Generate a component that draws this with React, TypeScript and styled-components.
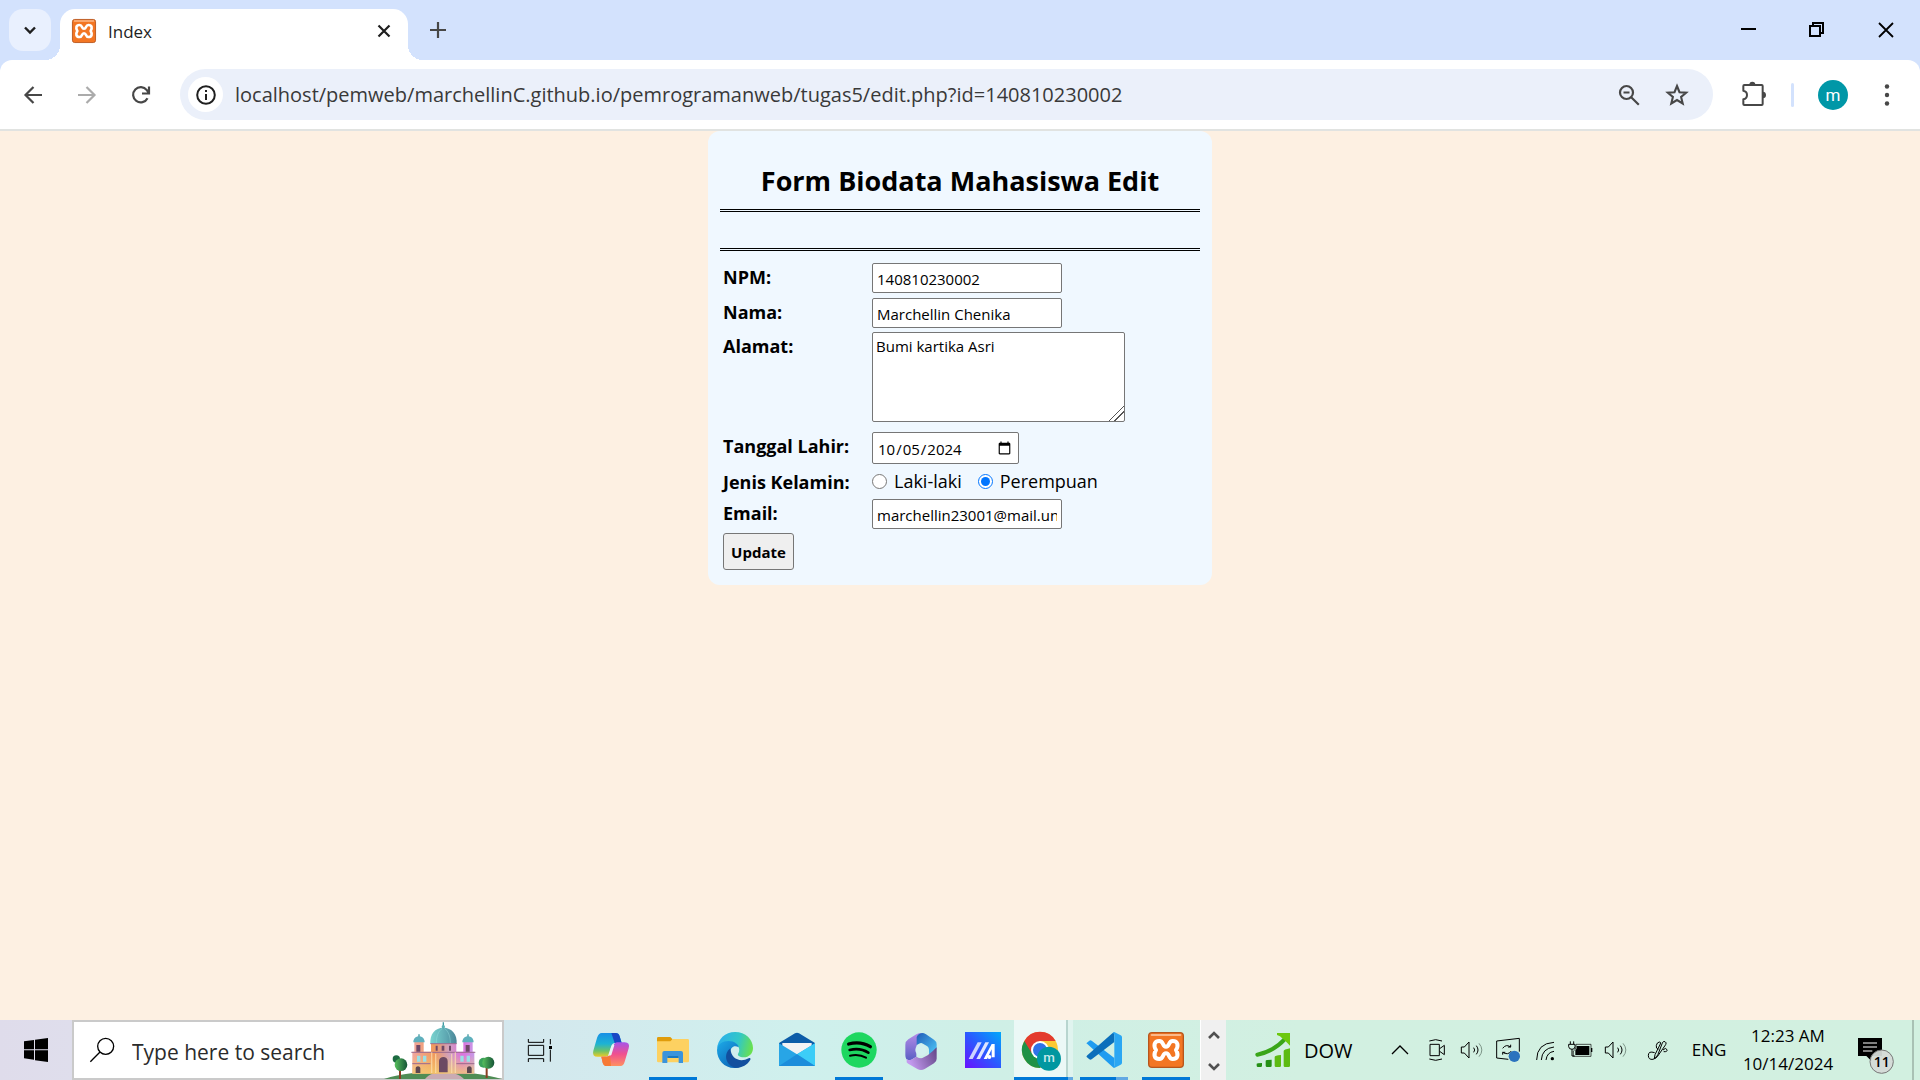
import React, { useState } from "react";
import styled, { createGlobalStyle } from "styled-components";

const GlobalStyle = createGlobalStyle`
  * { box-sizing: border-box; }
  body { margin: 0; font-family: "Open Sans", "Noto Sans", sans-serif; color: #000; }
  button, input, textarea { font-family: inherit; }
  button { border: 0; padding: 0; background: none; color: inherit; }
  svg { display: block; flex: none; overflow: visible; }
`;

/* ---------- window frame ---------- */

const Window = styled.div`
  min-height: 100vh;
  display: flex;
  flex-direction: column;
  background: #fdf0e2;
`;

const TabStrip = styled.header`
  height: 60px;
  display: flex;
  align-items: flex-end;
  padding-left: 9px;
  background: #d3e2fd;
`;

const TabSearch = styled.button`
  width: 42px;
  height: 42px;
  margin: 0 9px 9px 0;
  display: grid;
  place-items: center;
  border-radius: 14px;
  background: #e9f0fe;
`;

const Tab = styled.div`
  position: relative;
  width: 348px;
  height: 51px;
  padding: 0 12px 8px;
  display: flex;
  align-items: center;
  gap: 12px;
  border-radius: 15px 15px 0 0;
  background: #fff;
  font-size: 17px;
  color: #1f1f1f;

  &::before,
  &::after {
    content: "";
    position: absolute;
    bottom: 0;
    width: 15px;
    height: 15px;
  }
  &::before {
    right: 100%;
    background: radial-gradient(circle at 0 0, transparent 15px, #fff 15px);
  }
  &::after {
    left: 100%;
    background: radial-gradient(circle at 100% 0, transparent 15px, #fff 15px);
  }
`;

const TabTitle = styled.span`
  flex: 1;
  padding-top: 2px;
`;

const IconButton = styled.button<{ $w?: number; $h?: number }>`
  width: ${(p) => p.$w ?? 24}px;
  height: ${(p) => p.$h ?? 24}px;
  flex: none;
  display: grid;
  place-items: center;
`;

const WindowButtons = styled.div`
  margin-left: auto;
  display: flex;
`;

const Toolbar = styled.div`
  background: #d3e2fd;
`;

const ToolbarInner = styled.div`
  height: 71px;
  padding: 9px 15px 9px 6px;
  display: flex;
  align-items: center;
  border-bottom: 2px solid #e1e3e1;
  border-radius: 12px 12px 0 0;
  background: #fff;
`;

const Omnibox = styled.form`
  flex: 1;
  height: 51px;
  margin: 0 14px 0 12px;
  padding: 0 12px 0 8px;
  display: flex;
  align-items: center;
  border-radius: 26px;
  background: #ebf0fa;
`;

const SiteInfo = styled.button`
  width: 35px;
  height: 35px;
  margin-right: 12px;
  display: grid;
  place-items: center;
  border-radius: 50%;
  background: #fff;
`;

const UrlInput = styled.input`
  flex: 1;
  min-width: 0;
  padding: 0;
  border: 0;
  outline: 0;
  background: transparent;
  font-size: 20px;
  color: #393939;
`;

const Divider = styled.span`
  width: 3px;
  height: 24px;
  margin: 0 24px 0 10px;
  border-radius: 2px;
  background: #d3e2fd;
`;

const Avatar = styled.button`
  width: 30px;
  height: 30px;
  margin-right: 21px;
  border-radius: 50%;
  background: #0097a7;
  color: #fff;
  font-family: Roboto, sans-serif;
  font-size: 17px;
  line-height: 28px;
`;

/* ---------- biodata form ---------- */

const Page = styled.main`
  flex: 1;
`;

const Card = styled.section`
  width: 504px;
  margin: 0 auto;
  padding: 31px 12px 15px;
  border-radius: 12px;
  background: #f0f8ff;
`;

const Title = styled.h1`
  margin: 0 0 9px;
  text-align: center;
  font-size: 27px;
  line-height: 38px;
  font-weight: 700;
`;

const DoubleRule = styled.hr`
  height: 3px;
  margin: 0 0 36px;
  border: solid #000;
  border-width: 1px 0;

  & + & {
    margin-bottom: 12px;
  }
`;

const BioForm = styled.form`
  padding: 0 3px;
  display: grid;
  gap: 4px;
`;

const Row = styled.div<{ $h: number }>`
  height: ${(p) => p.$h}px;
  display: grid;
  grid-template-columns: 149px 1fr;
  align-items: start;
`;

const Label = styled.label`
  padding-top: 1px;
  font-size: 18px;
  line-height: 27px;
  font-weight: 700;
`;

const TextInput = styled.input`
  width: 190px;
  height: 30px;
  padding: 1px 4px 0;
  border: 1px solid #767676;
  border-radius: 2px;
  background: #fff;
  font-size: 15px;
  color: #000;
`;

const DateInput = styled(TextInput)`
  width: 147px;
  height: 32px;
`;

const Address = styled.textarea`
  width: 253px;
  height: 90px;
  padding: 3px;
  border: 1px solid #767676;
  border-radius: 2px;
  background: #fff;
  font-size: 15px;
  line-height: 20px;
  color: #000;

  &::-webkit-resizer {
    background: linear-gradient(
      135deg,
      transparent 10px,
      #555 10px,
      #555 11px,
      transparent 11px,
      transparent 14px,
      #555 14px,
      #555 15px,
      transparent 15px
    );
  }
`;

const Radios = styled.div`
  display: flex;
  align-items: center;
  font-size: 18px;
  line-height: 27px;
`;

const Choice = styled.label`
  margin-right: 16px;
  display: flex;
  align-items: center;
  gap: 7px;
`;

const Radio = styled.input`
  width: 15px;
  height: 15px;
  margin: 0;
`;

const Submit = styled.button`
  width: 71px;
  height: 37px;
  border: 1px solid #767676;
  border-radius: 3px;
  background: #efefef;
  font-size: 15px;
  font-weight: 700;
`;

/* ---------- taskbar ---------- */

const Taskbar = styled.footer`
  height: 60px;
  display: flex;
  background: linear-gradient(90deg, #dfdceb 0, #dfdeec 72px, #d4e8ee 520px, #cff0ed 800px, #cfefe6 1000px, #d2f0e1 1300px, #d2f0e0 100%);
`;

const Start = styled.button`
  width: 72px;
  display: grid;
  place-items: center;
`;

const SearchBox = styled.label`
  width: 432px;
  padding-left: 16px;
  display: flex;
  align-items: center;
  border: 2px solid #cacaca;
  background: #fff;
`;

const SearchInput = styled.input`
  flex: 1;
  min-width: 0;
  margin-left: 18px;
  padding: 4px 0 0;
  border: 0;
  outline: 0;
  background: none;
  font-size: 21px;
  &::placeholder { color: #2b2b2b; opacity: 1; }
`;

const AppButton = styled.button<{ $w?: number; $run?: string; $active?: boolean }>`
  position: relative;
  width: ${(p) => p.$w ?? 62}px;
  display: grid;
  place-items: center;
  &::after {
    content: "";
    position: absolute;
    bottom: 0;
    height: 3px;
    left: ${(p) => (p.$active ? 0 : 7)}px;
    right: ${(p) => (p.$active ? 0 : 7)}px;
    background: ${(p) => p.$run ?? "none"};
  }
`;

const ActiveApp = styled(AppButton)`
  padding-right: 7px;
  background: linear-gradient(90deg, #ebf8f6 52px, #b7d5cf 52px, #b7d5cf 54px, #e0f4ef 54px);
`;

const Scroller = styled.div`
  width: 26px;
  margin-left: 3px;
  display: flex;
  flex-direction: column;
  justify-content: space-between;
  align-items: center;
  padding: 7px 0 5px;
  border-left: 1px solid #fff;
  background: #f0f0f0;
`;

const News = styled.button`
  padding-left: 30px;
  display: flex;
  align-items: center;
  gap: 14px;
  font-size: 20px;
`;

const Tray = styled.div`
  margin-left: auto;
  display: flex;
`;

const TrayItem = styled.button<{ $w?: number }>`
  width: ${(p) => p.$w ?? 36}px;
  display: grid;
  place-content: center;
  font-size: 17px;
  line-height: 28px;
  text-align: center;
`;

const ShowDesktop = styled.button`
  width: 8px;
  border-left: 2px solid #a9c1b4;
`;

/* ---------- drawings ---------- */

type ArtProps = { box: string; w?: number; h?: number; children: React.ReactNode };

const Art = ({ box, w = 36, h = w, children }: ArtProps) => (
  <svg width={w} height={h} viewBox={box} fill="none" aria-hidden="true">
    {children}
  </svg>
);

const Xampp = ({ size }: { size: number }) => (
  <Art box="561 51 108 108" w={size}>
    <rect x="563" y="53" width="104" height="104" rx="10" fill="#f37623" stroke="#b8551b" strokeWidth="4" />
    <path d="M572 60h86" stroke="#fbb98a" strokeWidth="6" strokeLinecap="round" />
    <path
      d="M615 95C603 95 609 78 595 78 579 78 577 92 585 105 577 118 579 132 595 132 609 132 603 115 615 115 627 115 621 132 635 132 651 132 653 118 645 105 653 92 651 78 635 78 621 78 627 95 615 95Z"
      stroke="#fff"
      strokeWidth="12"
      strokeLinejoin="round"
    />
  </Art>
);

const Castle = () => (
  <Art box="195 18 354 174" w={118} h={58}>
    <defs>
      <linearGradient id="wall" x1="280" x2="466" y1="0" y2="0" gradientUnits="userSpaceOnUse">
        <stop stopColor="#f0a7a0" />
        <stop offset=".35" stopColor="#f19a5c" />
        <stop offset=".6" stopColor="#cfa0c0" />
        <stop offset=".8" stopColor="#dd71dc" />
        <stop offset="1" stopColor="#c79be8" />
      </linearGradient>
      <linearGradient id="base" x1="0" x2="0" y1="120" y2="180" gradientUnits="userSpaceOnUse">
        <stop stopColor="#f7d169" stopOpacity="0" />
        <stop offset="1" stopColor="#f3cf6e" stopOpacity=".85" />
      </linearGradient>
      <linearGradient id="dome" x1="335" x2="412" y1="0" y2="0" gradientUnits="userSpaceOnUse">
        <stop stopColor="#79d3cf" />
        <stop offset=".6" stopColor="#5fa9b3" />
        <stop offset="1" stopColor="#4b8798" />
      </linearGradient>
      <linearGradient id="leaf" x1="0" x2="1">
        <stop stopColor="#58c05d" />
        <stop offset="1" stopColor="#155437" />
      </linearGradient>
    </defs>
    <path d="M195 192c50-18 110-22 178-22s120 6 176 22Z" fill="#4f8d55" />
    <path d="M318 192c10-14 30-22 55-22s50 8 62 22Z" fill="#c9abb3" />
    <path d="M280 110h186v66H280z" fill="url(#wall)" />
    <path d="M280 110h186v66H280z" fill="url(#base)" />
    <path d="M286 80h28v32h-28zM433 80h28v32h-28zM336 86h76v28h-76z" fill="url(#wall)" />
    <path d="M334 86c-2-28 14-48 39-48s42 20 40 48Z" fill="url(#dome)" />
    <path d="M352 84c0-20 6-36 18-44M394 84c0-20-6-36-18-44" stroke="#9be3e0" strokeOpacity=".6" strokeWidth="2" />
    <path d="M373 22v18M300 58v8M447 58v8" stroke="#3f98a0" strokeWidth="4" />
    <circle cx="373" cy="35" r="5" fill="#5ab1b5" />
    <path d="M283 82c0-24 34-24 34 0ZM430 82c0-24 34-24 34 0Z" fill="#5fb0bd" />
    <path d="M277 112h192M334 86h79M280 146h54M412 146h54" stroke="#9c6a8e" strokeWidth="3" />
    <path d="M338 112v62M350 116v58M398 116v58M409 112v62" stroke="#fce0b1" strokeOpacity=".7" strokeWidth="4" />
    <path d="M292 90h12v20h-12zM440 90h12v20h-12zM350 92h6v15h-6zM368 92h8v15h-8zM390 92h6v15h-6z" fill="#6e4867" />
    <path d="M294 122h10v18h-10zM312 122h10v18h-10zM424 122h10v18h-10zM443 122h10v18h-10z" fill="#9be0e6" />
    <path d="M360 172v-34c0-16 26-16 26 0v34Z" fill="#6c4a63" />
    <path d="M290 174v-14c0-8 14-8 14 0v14ZM444 174v-14c0-8 14-8 14 0v14Z" fill="#5d4650" />
    <path d="M243 192v-45M503 189v-43" stroke="#8a3e23" strokeWidth="6" />
    <circle cx="232" cy="132" r="11" fill="#1d6b42" />
    <circle cx="246" cy="149" r="19" fill="url(#leaf)" />
    <circle cx="494" cy="143" r="15" fill="#3ba25a" />
    <circle cx="508" cy="143" r="18" fill="url(#leaf)" />
  </Art>
);

const Speaker = () => (
  <Art box="660 69 72 72" w={24}>
    <path d="M664 96h9l14-15v48l-14-15h-9zM701 98q6 7 0 14M709 92q10 13 0 26" stroke="#000" strokeWidth="3" />
    <path d="M717 85q17 20 0 40" stroke="#7d9588" strokeWidth="3" />
  </Art>
);

const Chevron = ({ up }: { up?: boolean }) => (
  <Art box="0 0 12 12" w={12}>
    <path d={up ? "M1 9l5-5 5 5" : "M1 3l5 5 5-5"} stroke="#505050" strokeWidth="2.6" />
  </Art>
);

const BrowserTop = () => (
  <>
    <TabStrip>
      <TabSearch aria-label="Search tabs">
        <Art box="0 0 14 14" w={14}>
          <path d="M2 4.500l5 5 5-5" stroke="#1f1f1f" strokeWidth="2.400" />
        </Art>
      </TabSearch>
      <Tab>
        <Xampp size={24} />
        <TabTitle>Index</TabTitle>
        <IconButton aria-label="Close tab">
          <Art box="0 0 14 14" w={14}>
            <path d="M1.500 1.500l11 11M12.500 1.500l-11 11" stroke="#1f1f1f" strokeWidth="2.200" />
          </Art>
        </IconButton>
      </Tab>
      <IconButton $w={60} $h={60} aria-label="New tab">
        <Art box="0 0 16 16" w={16}>
          <path d="M8 0v16M0 8h16" stroke="#474747" strokeWidth="2.200" />
        </Art>
      </IconButton>
      <WindowButtons>
        <IconButton $w={69} $h={60} aria-label="Minimize">
          <Art box="0 0 16 16" w={16}>
            <path d="M1 7h15" stroke="#000" strokeWidth="2" />
          </Art>
        </IconButton>
        <IconButton $w={69} $h={60} aria-label="Restore">
          <Art box="0 0 16 16" w={16}>
            <path d="M1 4h10v10H1zM4 4V1h10v10h-3" stroke="#000" strokeWidth="2" />
          </Art>
        </IconButton>
        <IconButton $w={69} $h={60} aria-label="Close window">
          <Art box="0 0 16 16" w={16}>
            <path d="M1 1l14 14M15 1L1 15" stroke="#000" strokeWidth="1.800" />
          </Art>
        </IconButton>
      </WindowButtons>
    </TabStrip>
    <Toolbar>
      <ToolbarInner>
        <IconButton $w={54} aria-label="Back">
          <Art box="0 0 18 18" w={18}>
            <path d="M18 9H1.500M9.500 1L1.500 9l8 8" stroke="#474747" strokeWidth="2.200" />
          </Art>
        </IconButton>
        <IconButton $w={54} aria-label="Forward">
          <Art box="0 0 18 18" w={18}>
            <path d="M0 9h16.500M8.500 1l8 8-8 8" stroke="#ababab" strokeWidth="2.200" />
          </Art>
        </IconButton>
        <IconButton $w={54} aria-label="Reload">
          <Art box="0 0 18 18" w={18}>
            <path d="M15.500 12.200A7.600 7.600 0 1 1 14.800 4.200L16.500 6.500M17 .5v7H10" stroke="#474747" strokeWidth="2.200" />
          </Art>
        </IconButton>
        <Omnibox onSubmit={(e) => e.preventDefault()}>
          <SiteInfo type="button" aria-label="Site information">
            <Art box="0 0 20 20" w={20}>
              <circle cx="10" cy="10" r="8.800" stroke="#1f1f1f" strokeWidth="2" />
              <path d="M10 9v6M10 5v2" stroke="#1f1f1f" strokeWidth="2" />
            </Art>
          </SiteInfo>
          <UrlInput
            aria-label="Address"
            defaultValue="localhost/pemweb/marchellinC.github.io/pemrogramanweb/tugas5/edit.php?id=140810230002"
          />
          <IconButton $w={48} type="button" aria-label="Zoom out">
            <Art box="0 0 22 22" w={22}>
              <circle cx="8.500" cy="8.500" r="6.500" stroke="#474747" strokeWidth="2.200" />
              <path d="M13.200 13.200l7.600 7.600M5.500 8.500h6" stroke="#474747" strokeWidth="2.200" />
            </Art>
          </IconButton>
          <IconButton $w={48} type="button" aria-label="Bookmark this page">
            <Art box="0 0 24 24" w={24}>
              <path
                d="M12 3l2.500 6.200 6.700.5-5.100 4.300 1.600 6.500L12 17l-5.700 3.500L7.900 14 2.800 9.700l6.700-.5z"
                stroke="#474747"
                strokeWidth="2.100"
              />
            </Art>
          </IconButton>
        </Omnibox>
        <IconButton $w={54} $h={48} aria-label="Extensions">
          <Art box="546 244 72 78" w={24} h={26}>
            <path
              d="M550 256q0-3 3-3h52q3 0 3 3v54q0 3-3 3h-52q-3 0-3-3v-14q11-2 11-13t-11-13z"
              stroke="#474747"
              strokeWidth="6"
              strokeLinejoin="round"
            />
            <path d="M568 252a9 9 0 0 1 18 0zM608 273a10 10 0 0 1 0 20z" fill="#474747" />
          </Art>
        </IconButton>
        <Divider />
        <Avatar aria-label="Profile">m</Avatar>
        <IconButton $w={36} aria-label="Menu">
          <Art box="0 0 4 22" w={4} h={22}>
            <g fill="#474747">
              <circle cx="2" cy="2.500" r="2.200" />
              <circle cx="2" cy="11" r="2.200" />
              <circle cx="2" cy="19.500" r="2.200" />
            </g>
          </Art>
        </IconButton>
      </ToolbarInner>
    </Toolbar>
  </>
);

const BiodataForm = () => {
  const [gender, setGender] = useState("Perempuan");
  return (
    <Card>
      <Title>Form Biodata Mahasiswa Edit</Title>
      <DoubleRule />
      <DoubleRule />
      <BioForm onSubmit={(e) => e.preventDefault()}>
        <Row $h={31}>
          <Label htmlFor="npm">NPM:</Label>
          <TextInput id="npm" defaultValue="140810230002" />
        </Row>
        <Row $h={30}>
          <Label htmlFor="nama">Nama:</Label>
          <TextInput id="nama" defaultValue="Marchellin Chenika" />
        </Row>
        <Row $h={96}>
          <Label htmlFor="alamat">Alamat:</Label>
          <Address id="alamat" defaultValue="Bumi kartika Asri" />
        </Row>
        <Row $h={32}>
          <Label htmlFor="lahir">Tanggal Lahir:</Label>
          <DateInput id="lahir" type="date" defaultValue="2024-10-05" />
        </Row>
        <Row $h={27}>
          <Label as="span" id="kelamin">Jenis Kelamin:</Label>
          <Radios role="radiogroup" aria-labelledby="kelamin">
            {["Laki-laki", "Perempuan"].map((g) => (
              <Choice key={g}>
                <Radio type="radio" name="gender" checked={gender === g} onChange={() => setGender(g)} />
                {g}
              </Choice>
            ))}
          </Radios>
        </Row>
        <Row $h={30}>
          <Label htmlFor="email">Email:</Label>
          <TextInput id="email" defaultValue="marchellin23001@mail.unpad.ac.id" />
        </Row>
        <Submit type="submit">Update</Submit>
      </BioForm>
    </Card>
  );
};

const RUN = "#0078d7";

const TaskbarApps = () => (
  <>
    <AppButton $w={76} aria-label="Task View">
      <Art box="621 66 90 75" w={30} h={25}>
        <path d="M625 69v10h46V69M625 88h46v30h-46zM625 138v-10h46v10M691 69v16M691 101v36" stroke="#000" strokeWidth="3" />
        <path d="M687 90h9v9h-9z" fill="#000" />
      </Art>
    </AppButton>
    <AppButton aria-label="Copilot">
      <Art box="819 51 108 108">
        <defs>
          <linearGradient id="cpA" x1="0" x2="0" y1="54" y2="126" gradientUnits="userSpaceOnUse">
            <stop stopColor="#188fe6" />
            <stop offset=".45" stopColor="#1db3d3" />
            <stop offset=".75" stopColor="#6ec368" />
            <stop offset="1" stopColor="#f4cc22" />
          </linearGradient>
          <linearGradient id="cpB" x1="0" x2="0" y1="80" y2="154" gradientUnits="userSpaceOnUse">
            <stop stopColor="#a255ee" />
            <stop offset=".5" stopColor="#f0508f" />
            <stop offset="1" stopColor="#ff9260" />
          </linearGradient>
        </defs>
        <path d="M845 54h42q9 0 12 10l6 20h-20q-8 0-11 10l-6 22q-3 9-12 9h-23q-18 0-13-18l11-38q5-15 14-15z" fill="url(#cpA)" />
        <path d="M874 54h13q9 0 12 10l6 20h-21z" fill="#1a47c5" />
        <path d="M902 153h-42q-9 0-12-10l-4-18h16q8 0 12-9l8-23q3-11 12-11h22q17 0 12 18l-12 40q-4 13-12 13z" fill="url(#cpB)" />
        <path d="M873 153h-13q-9 0-12-10l-4-18h16q8 0 10-6z" fill="#f67a35" />
        <path d="M880 88q-6 2-8 10l-7 22q3 3 9 0l9-29z" fill="#e8f3f5" />
      </Art>
    </AppButton>
    <AppButton $run={RUN} aria-label="File Explorer">
      <Art box="45 51 108 108">
        <path d="M51 70q0-4 4-4h36l6 6v16H51z" fill="#e09c0b" />
        <path d="M51 79h40l7-7h45q4 0 4 4v62q0 4-4 4H55q-4 0-4-4z" fill="#fdd161" />
        <path d="M67 144v-30q0-6 6-6h50q6 0 6 6v30h-13v-21H82v21z" fill="#3b94dc" />
        <path d="M82 123h34v6H82z" fill="#1979c4" />
      </Art>
    </AppButton>
    <AppButton aria-label="Microsoft Edge">
      <Art box="231 51 108 108">
        <defs>
          <linearGradient id="edA" x1="240" x2="338" y1="70" y2="95" gradientUnits="userSpaceOnUse">
            <stop stopColor="#2bb1e8" />
            <stop offset=".55" stopColor="#31c7c8" />
            <stop offset="1" stopColor="#6ae14c" />
          </linearGradient>
          <linearGradient id="edB" x1="235" x2="290" y1="90" y2="155" gradientUnits="userSpaceOnUse">
            <stop stopColor="#1ba2e2" />
            <stop offset="1" stopColor="#0b63b6" />
          </linearGradient>
        </defs>
        <path d="M231 104C232 72 256 51 285 51c32 0 54 23 54 48 0 17-12 28-28 28-12 0-21-5-16-12 8-13-1-32-24-34-20-2-36 8-40 23z" fill="url(#edA)" />
        <path d="M231 105c2-18 17-27 34-27 19 0 31 11 31 19-13-9-25 0-25 14 0 26 27 42 48 29-9 13-22 19-36 19-30 0-52-24-52-54z" fill="url(#edB)" />
        <path d="M271 100c-22 17-14 51 14 58 20 1 37-8 46-24 2-4-2-6-5-4-25 13-53 3-55-30z" fill="#124f9e" />
      </Art>
    </AppButton>
    <AppButton aria-label="Mail">
      <Art box="417 51 108 108">
        <path d="M417 84l48-29q6-4 12 0l48 29v20H417z" fill="#0c5ca8" />
        <path d="M427 84h88v20l-44 20-44-20z" fill="#f2f2f4" />
        <path d="M417 85l54 33 54-33v68H417z" fill="#28a5e6" />
        <path d="M525 85v68l-54-35z" fill="#3ccdf7" />
        <path d="M417 153l54-35 54 35z" fill="#1c8ddb" />
      </Art>
    </AppButton>
    <AppButton $run={RUN} aria-label="Spotify">
      <Art box="603 51 108 108">
        <circle cx="657" cy="105" r="53" fill="#1ed760" />
        <path d="M626 87q35-10 65 8" stroke="#000" strokeWidth="10" strokeLinecap="round" />
        <path d="M629 105q31-8 56 8" stroke="#000" strokeWidth="8" strokeLinecap="round" />
        <path d="M630 122q27-6 48 6" stroke="#000" strokeWidth="6" strokeLinecap="round" />
      </Art>
    </AppButton>
    <AppButton aria-label="Microsoft 365">
      <Art box="789 51 108 108">
        <defs>
          <linearGradient id="mA" x1="0" x2="0" y1="55" y2="135" gradientUnits="userSpaceOnUse">
            <stop stopColor="#b58be8" />
            <stop offset="1" stopColor="#5b5fc4" />
          </linearGradient>
          <linearGradient id="mB" x1="835" x2="890" y1="60" y2="110" gradientUnits="userSpaceOnUse">
            <stop stopColor="#2465bd" />
            <stop offset="1" stopColor="#4cc3f5" />
          </linearGradient>
          <linearGradient id="mC" x1="810" x2="890" y1="145" y2="110" gradientUnits="userSpaceOnUse">
            <stop stopColor="#c49af0" />
            <stop offset="1" stopColor="#67498c" />
          </linearGradient>
        </defs>
        <path d="M849 54q-12-1-20 4l-24 15q-9 6-9 16v32q0 18 17 14l16-10V96q0-7 6-11z" fill="url(#mA)" />
        <path d="M849 54q-14 0-19 12v24l10-5q4-2 9 1l13 8q5 4 5 10v19l14-9q9-6 9-15V88q0-9-8-14l-24-16q-4-3-9-4z" fill="url(#mB)" />
        <path d="M800 133q7 5 17 0l12-8q11 6 18 4l16-8q18-14 27-24v34q0 9-8 14l-28 17q-11 6-22 0l-26-15q-5-3-6-5z" fill="url(#mC)" />
        <circle cx="843" cy="105" r="17" fill="#d3f0ef" />
      </Art>
    </AppButton>
    <AppButton aria-label="MyASUS">
      <Art box="12 51 108 108">
        <defs>
          <linearGradient id="asus" x1="12" x2="120" y1="159" y2="51" gradientUnits="userSpaceOnUse">
            <stop stopColor="#6a10ff" />
            <stop offset=".5" stopColor="#2b59ff" />
            <stop offset="1" stopColor="#00a8fa" />
          </linearGradient>
        </defs>
        <path d="M12 51h108v108H12z" fill="url(#asus)" />
        <path d="M23 132l27-50h12l-27 50z" fill="#cdd5ff" />
        <path d="M46 132l27-50h11l-27 50z" fill="#dfe5ff" />
        <path d="M68 132l24-45h9v40h-9v-24l-14 29z" fill="#fff" />
        <circle cx="85" cy="126" r="6" fill="#fff" />
      </Art>
    </AppButton>
    <ActiveApp $w={59} $active $run="linear-gradient(90deg, #0078d7 54px, #62a9e3 54px)" aria-label="Google Chrome">
      <Art box="186 51 108 108">
        <circle cx="240" cy="105" r="54" fill="#fcc934" />
        <path d="M193 78a54 54 0 0 0 47 81l22-42z" fill="#1e9146" />
        <path d="M240 78h47a54 54 0 0 0-94 0l22 36z" fill="#e33b2e" />
        <circle cx="240" cy="105" r="27" fill="#fff" />
        <circle cx="240" cy="105" r="21" fill="#2f72e8" />
        <circle cx="267" cy="131" r="36" fill="#0097a0" />
        <text x="267" y="142" textAnchor="middle" fontFamily="Roboto, sans-serif" fontSize="40" fontWeight="500" fill="#c9eaec">
          m
        </text>
      </Art>
    </ActiveApp>
    <AppButton $run="linear-gradient(90deg, #0078d7 36px, #62a9e3 36px)" aria-label="Visual Studio Code">
      <Art box="378 51 108 108">
        <path d="M380 84l8-7q3-2 7 0l68 52v29l-6-3-75-68q-4-2-2-3z" fill="#1f9cf0" />
        <path d="M380 126l8 7q3 2 7 0l68-52V52l-6 3-75 66q-4 3-2 5z" fill="#0b6fbb" />
        <path d="M457 55q3-4 7-3l18 9q4 2 4 6v76q0 4-4 6l-18 9q-4 1-7-3 6 2 6-4V60q0-6-6-5z" fill="#2ba7f3" />
      </Art>
    </AppButton>
    <AppButton $run={RUN} aria-label="XAMPP">
      <Xampp size={36} />
    </AppButton>
    <Scroller>
      <IconButton $h={16} aria-label="Scroll up">
        <Chevron up />
      </IconButton>
      <IconButton $h={16} aria-label="Scroll down">
        <Chevron />
      </IconButton>
    </Scroller>
  </>
);

const SystemTray = () => (
  <Tray>
    <TrayItem aria-label="Show hidden icons">
      <Art box="0 0 18 10" w={18} h={10}>
        <path d="M1 9l8-8 8 8" stroke="#000" strokeWidth="1.300" />
      </Art>
    </TrayItem>
    <TrayItem aria-label="Meet Now">
      <Art box="552 69 72 72" w={24}>
        <path d="M570 88h28v34h-28zM599 101l14-10v28l-14-10M568 78q19-8 38 0M568 132q19 8 38 0" stroke="#000" strokeWidth="3" />
      </Art>
    </TrayItem>
    <TrayItem aria-label="Volume">
      <Speaker />
    </TrayItem>
    <TrayItem aria-label="Windows Update">
      <Art box="768 69 72 72" w={24}>
        <path d="M805 133l-35-4V78l68-8v40" stroke="#000" strokeWidth="3" />
        <path d="M788 100q10-14 24-4v-7M812 96h-8M814 108q-10 14-26 4v7M788 112h8" stroke="#000" strokeWidth="3" />
        <circle cx="823" cy="124" r="17" fill="#2b73be" />
      </Art>
    </TrayItem>
    <TrayItem aria-label="Network">
      <Art box="876 69 72 72" w={24}>
        <path d="M890 135q0-50 52-53M904 135q2-35 38-39M918 135q3-23 24-26" stroke="#000" strokeWidth="3" />
        <circle cx="937" cy="131" r="5" fill="#000" />
      </Art>
    </TrayItem>
    <TrayItem aria-label="Battery">
      <Art box="24 69 72 72" w={24}>
        <path d="M31 79v8M41 79v8M26 88h19v7q0 8-9 8t-10-8zM36 103v20h8" stroke="#000" strokeWidth="3" />
        <path d="M48 88h45v36H40v-16q8-4 8-12z" stroke="#000" strokeWidth="2" />
        <path d="M50 93h38v27H46v-14q4-4 4-8zM93 99h4v12h-4z" fill="#000" />
      </Art>
    </TrayItem>
    <TrayItem aria-label="Volume mixer">
      <Speaker />
    </TrayItem>
    <TrayItem $w={48} aria-label="Windows Ink">
      <Art box="258 69 72 72" w={24}>
        <path
          d="M284 113q-19-6-19 8 0 14 14 12 10-1 15-15l13-34q3-7 8-4 6 3 2 9l-25 36-9 6 2-12 16-32q3-6-3-6-7 1-9 10-2 10 6 12M309 105q8-9 12-1 2 7-10 6"
          stroke="#000"
          strokeWidth="3"
        />
      </Art>
    </TrayItem>
    <TrayItem $w={54}>ENG</TrayItem>
    <TrayItem $w={104}>
      <span>12:23 AM</span>
      <span>10/14/2024</span>
    </TrayItem>
    <TrayItem $w={72} aria-label="Notifications">
      <Art box="894 33 108 144" w={36} h={48}>
        <path d="M894 69h72v54h-31v16l-16-16h-25z" fill="#000" />
        <path d="M909 84h42M909 96h42M909 108h28" stroke="#fff" strokeWidth="3" />
        <circle cx="965" cy="140" r="35" fill="#d5dad7" fillOpacity=".95" stroke="#777" strokeWidth="3" />
        <text x="965" y="155" textAnchor="middle" fontFamily="Open Sans, sans-serif" fontSize="42" fontWeight="600" fill="#000">
          11
        </text>
      </Art>
    </TrayItem>
    <ShowDesktop aria-label="Show desktop" />
  </Tray>
);

export default function App() {
  return (
    <Window>
      <GlobalStyle />
      <BrowserTop />
      <Page>
        <BiodataForm />
      </Page>
      <Taskbar>
        <Start aria-label="Start">
          <Art box="72 69 72 72" w={24}>
            <path d="M72 79l30-4v28H72zM105 74l39-5v34h-39zM72 106h30v28l-30-4zM105 106h39v35l-39-5z" fill="#000" />
          </Art>
        </Start>
        <SearchBox>
          <Art box="270 69 72 72" w={24}>
            <circle cx="317" cy="94" r="24" stroke="#000" strokeWidth="4" />
            <path d="M300 111l-29 29" stroke="#000" strokeWidth="4" />
          </Art>
          <SearchInput placeholder="Type here to search" aria-label="Search Windows" />
          <Castle />
        </SearchBox>
        <TaskbarApps />
        <News>
          <Art box="48 54 102 102" w={34}>
            <path d="M52 119q50-10 84-48" stroke="#3aa619" strokeWidth="12" strokeLinecap="round" />
            <path d="M111 54h39v38l-10-10-20-18-9-4z" fill="#6cc80e" />
            <path d="M50 146q0-2 16-2v8q0 4-4 4h-8q-4 0-4-4zM77 137q0-3 18-3v18q0 4-4 4H81q-4 0-4-4z" fill="#259016" />
            <path d="M104 126q0-4 19-6v32q0 4-4 4h-11q-4 0-4-4zM131 108q0-4 19-8v52q0 4-4 4h-11q-4 0-4-4z" fill="#5dbb12" />
          </Art>
          DOW
        </News>
        <SystemTray />
      </Taskbar>
    </Window>
  );
}
